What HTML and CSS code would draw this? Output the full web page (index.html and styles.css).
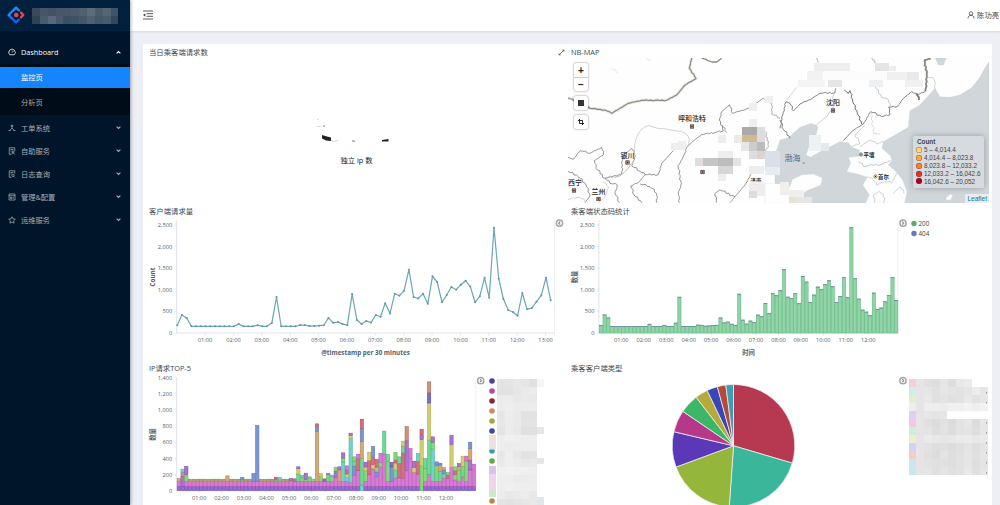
FILE: index.html
```html
<!DOCTYPE html>
<html>
<head>
<meta charset="utf-8">
<title>Dashboard</title>
<link rel="stylesheet" href="styles.css">
</head>
<body>
<div class="app">
  <aside class="sidebar">
    <div class="brand">
      <svg class="brand-logo" viewBox="0 0 18 18"><g fill="none" stroke-width="2.3" stroke-linejoin="round" stroke-linecap="round"><path stroke="#2489ee" d="M11.9 4.400 9 1.600 1.600 9 5 12.400"/><path stroke="#1763e8" d="M3.400 10.800 9 16.400l2.800-2.800"/><path stroke="#f04450" d="M14 6.600 16.300 9 14 11.400"/></g><circle cx="9.300" cy="9" r="2.300" fill="#f04450"/></svg>
      <svg class="brand-name" id="brand-name" viewBox="0 0 86 16"></svg>
    </div>
    <nav class="menu">
      <a class="item open"><svg class="icon" viewBox="0 0 16 16"><path d="M3.500 13.500a6.500 6.500 0 1 1 9 0zM8 9l3-3M8 4v1M4 8H3"/></svg><span>Dashboard</span><svg class="arrow" viewBox="0 0 8 8"><path d="M1 5.500 4 2.500l3 3"/></svg></a>
      <div class="submenu"><a class="sub active">监控页</a><a class="sub">分析页</a></div>
      <a class="item"><svg class="icon" viewBox="0 0 16 16"><path d="M8 3v5l-4.500 5M8 8l4.500 5M6.500 2.500h3v2h-3zM1 13h4.500M10.500 13H15"/></svg><span>工单系统</span><svg class="arrow" viewBox="0 0 8 8"><path d="m1 2.500 3 3 3-3"/></svg></a>
      <a class="item"><svg class="icon" viewBox="0 0 16 16"><path d="M6 14.500H2.500v-13h11v7M5 5h6M5 8h2M10 8a2 2 0 1 1 0 4 2 2 0 0 1 0-4M7.500 15c0-4 5-4 6 0"/></svg><span>自助服务</span><svg class="arrow" viewBox="0 0 8 8"><path d="m1 2.500 3 3 3-3"/></svg></a>
      <a class="item"><svg class="icon" viewBox="0 0 16 16"><path d="M7 14.500H2.500v-13h11V7M5 5h6M5 8h2M10 8.500a2.300 2.300 0 1 1 0 4.600 2.300 2.300 0 0 1 0-4.600M12 13l2 2"/></svg><span>日志查询</span><svg class="arrow" viewBox="0 0 8 8"><path d="m1 2.500 3 3 3-3"/></svg></a>
      <a class="item"><svg class="icon" viewBox="0 0 16 16"><path d="M2 2h12v12H2zM2 5.500h12M5 8.500h2.500v2.500H5zM10.500 8v3.500"/></svg><span>管理&amp;配置</span><svg class="arrow" viewBox="0 0 8 8"><path d="m1 2.500 3 3 3-3"/></svg></a>
      <a class="item"><svg class="icon" viewBox="0 0 16 16"><path d="m8 1.500 2 4.300 4.600.6-3.400 3.200.9 4.700L8 12l-4.100 2.300.9-4.700L1.400 6.400 6 5.800z"/></svg><span>运维服务</span><svg class="arrow" viewBox="0 0 8 8"><path d="m1 2.500 3 3 3-3"/></svg></a>
    </nav>
  </aside>
  <div class="main">
    <header class="topbar">
      <svg class="fold" viewBox="0 0 10 10"><path d="M0 1h10M3.600 3.700H10M3.600 6.300H10M0 9h10" fill="none" stroke="#444" stroke-width=".9"/><path d="M2.400 3.200v3.600L0 5z" fill="#444"/></svg>
      <div class="user"><svg viewBox="0 0 16 16"><circle cx="8" cy="5" r="3.500"/><path d="M2 15c0-4 2.500-6.500 6-6.500s6 2.500 6 6.500"/></svg><span>陈功亮</span></div>
    </header>
    <main class="board">
      <section class="panel">
        <h2>当日乘客端请求数</h2>
        <svg class="chart" id="metric" viewBox="143 44 422 159"></svg>
      </section>
      <section class="panel">
        <svg class="expand" viewBox="0 0 8 8"><path d="m1.500 6.500 5-5" stroke="#555" stroke-width=".9"/><path d="M4.500.8h2.700v2.700zM.8 4.500v2.700h2.700z" fill="#555"/></svg>
        <h2>NB-MAP</h2>
        <div class="map">
          <svg id="map" viewBox="568 58 421 145"></svg>
          <div class="controls">
            <div class="ctl"><b>+</b><b>−</b></div>
            <div class="ctl"><b><i class="square"></i></b></div>
            <div class="ctl"><b><svg viewBox="0 0 8 8"><path d="M2 0v6h6M0 2h6v6" fill="none" stroke="#222" stroke-width="1.300"/></svg></b></div>
          </div>
          <div class="legend">
            <strong>Count</strong>
            <span><i class="c1"></i>5 – 4,014.4</span>
            <span><i class="c2"></i>4,014.4 – 8,023.8</span>
            <span><i class="c3"></i>8,023.8 – 12,033.2</span>
            <span><i class="c4"></i>12,033.2 – 16,042.6</span>
            <span><i class="c5"></i>16,042.6 – 20,052</span>
          </div>
          <a class="leaflet">Leaflet</a>
        </div>
      </section>
      <section class="panel">
        <h2>客户端请求量</h2>
        <svg class="chart" id="requests" viewBox="143 203 422 157"></svg>
      </section>
      <section class="panel">
        <h2>乘客端状态码统计</h2>
        <svg class="chart" id="status" viewBox="565 203 427 157"></svg>
      </section>
      <section class="panel">
        <h2>IP请求TOP-5</h2>
        <svg class="chart" id="top-ip" viewBox="143 360 422 145"></svg>
      </section>
      <section class="panel">
        <h2>乘客客户端类型</h2>
        <svg class="chart" id="clients" viewBox="565 360 427 145"></svg>
      </section>
    </main>
  </div>
</div>
<script src="charts.js"></script>
</body>
</html>
```
FILE: styles.css
```css
* { box-sizing: border-box; }
body { margin: 0; font-family: "Open Sans", "Noto Sans CJK SC", sans-serif; overflow: hidden; }
.app { display: flex; width: 1000px; height: 505px; background: #eeeff4; }

.sidebar { width: 130px; background: #001529; box-shadow: 1px 0 3px rgba(0, 21, 41, .35); z-index: 2; color: #a6afb7; }
.brand { height: 31px; background: #00203d; display: flex; align-items: center; padding: 0 8px 1px 7px; gap: 7px; }
.brand-logo { width: 18px; height: 18px; }
.brand-name { width: 86px; height: 16px; margin-top: 2px; }
.menu { display: flex; flex-direction: column; padding-top: 9px; font-size: 7.25px; }
.item { height: 23px; display: flex; align-items: center; padding: 0 9px 0 8px; gap: 5px; }
.item span { flex: 1; white-space: nowrap; }
.item.open { height: 24px; color: #fff; }
.icon { width: 8px; height: 8px; fill: none; stroke: currentColor; stroke-width: 1.5; }
.arrow { width: 5px; height: 5px; fill: none; stroke: currentColor; stroke-width: 1.7; }
.submenu { background: #000c17; padding: 3px 0 2px; margin-bottom: 1px; display: flex; flex-direction: column; gap: 4px; }
.sub { height: 21px; line-height: 21px; padding-left: 21px; }
.sub.active { background: #1684fc; color: #fff; }

.main { flex: 1; display: flex; flex-direction: column; min-width: 0; }
.topbar { height: 31px; flex: none; background: #fff; display: flex; align-items: center; justify-content: space-between; padding: 0 1px 2px 13px; box-shadow: 0 1px 2px rgba(0, 21, 41, .1); }
.fold { width: 10px; height: 10px; }
.user { display: flex; align-items: center; gap: 2px; font-size: 7.3px; color: #444; }
.user svg { width: 8px; height: 8px; fill: none; stroke: #444; stroke-width: 1.5; }

.board { margin: 13px 8px 0 13px; background: #fff; display: grid; grid-template-columns: 422px 427px; grid-template-rows: 159px 157px 145px; }
.panel { position: relative; padding-left: 6px; }
.panel h2 { margin: 0; font-size: 7.35px; line-height: 10px; padding-top: 3px; font-weight: 400; color: #3c484f; }
.chart { position: absolute; inset: 0; width: 100%; height: 100%; }
.expand { position: absolute; left: -7px; top: 5px; width: 7px; height: 7px; }

.map { position: relative; width: 421px; height: 145px; margin: 1px 0 0 -3px; }
.map > svg { display: block; width: 421px; height: 145px; }
.controls { position: absolute; left: 6px; top: 5px; display: flex; flex-direction: column; gap: 5px; }
.ctl { width: 14px; background: #fff; border-radius: 2px; box-shadow: 0 0 2px rgba(0, 0, 0, .55); }
.ctl b { height: 14px; display: flex; align-items: center; justify-content: center; font: bold 10px "Liberation Sans", sans-serif; color: #222; }
.ctl b + b { border-top: 1px solid #ccc; }
.square { width: 6px; height: 6px; background: #333; }
.ctl svg { width: 6px; height: 6px; }
.legend { position: absolute; right: 5px; top: 78px; width: 71px; height: 52px; padding: 2px 3px; border-radius: 2.5px; background: rgba(215, 219, 223, .95); box-shadow: 0 0 6px rgba(0, 0, 0, .28); font: 6.35px/7.9px "Liberation Sans", sans-serif; color: #444; display: flex; flex-direction: column; white-space: nowrap; }
.legend strong { padding-left: 1px; }
.legend span { display: flex; align-items: center; gap: 2px; }
.legend i { width: 6px; height: 6px; border-radius: 50%; box-shadow: inset 0 0 0 .5px rgba(90, 50, 20, .6); flex: none; }
.c1 { background: #fed976; }
.c2 { background: #feab3b; }
.c3 { background: #f97d3c; }
.c4 { background: #e3312a; }
.c5 { background: #a80026; }
.leaflet { position: absolute; right: 0; bottom: 0; padding: 0 2px; height: 9px; font: 6.5px/9px "Liberation Sans", sans-serif; color: #0078a8; background: rgba(255, 255, 255, .55); }

.tick { font-size: 5.7px; fill: #555d66; }
.axis-title { font-size: 6.3px; font-weight: 700; fill: #565f68; }
.caption { font-size: 7.3px; fill: #222; }
.legend-label { font-size: 6.3px; fill: #444; }
.city { font-size: 6.9px; font-weight: 500; fill: #222; }
.town { font-size: 5.4px; font-weight: 700; fill: #222; }
.sea-name { font-size: 8px; fill: #566580; }
```
FILE: charts.js
```js
const el = id => document.getElementById(id);
const add = (id, markup) => { el(id).innerHTML += markup; };
const rect = (x, y, w, h, fill, extra = '') => `<rect x="${x}" y="${y}" width="${w}" height="${h}" fill="${fill}" ${extra}/>`;
const text = (x, y, cls, label, anchor = 'start', extra = '') => `<text x="${x}" y="${y}" class="${cls}" text-anchor="${anchor}" ${extra}>${label}</text>`;
const path = (d, stroke, width = 1, fill = 'none') => `<path d="${d}" fill="${fill}" stroke="${stroke}" stroke-width="${width}" stroke-linejoin="round"/>`;

// Masked labels: one hex digit per cell, added to a light base shade.
function masked(x, y, w, h, base, rows) {
  return rows.map((row, r) => [...row].map((ch, c) => {
    const v = base + parseInt(ch, 16) * 2;
    return rect(x + c * w, y + r * h, w, h, `rgb(${v},${v},${v})`, 'shape-rendering="crispEdges"');
  }).join('')).join('');
}

const brandShades = ['3a4a5c45566742526446576848586a4a5b6c5060705d6c7b4d5c6d566675405266', '3042554a5b6c5a6977485a6b3d50633f516445576950607045576a4a5b6c34485c'];
brandShades.forEach((row, r) => row.match(/.{6}/g).forEach((c, i) => add('brand-name', rect(i * 7.85, r * 8, 7.9, 8, '#' + c, 'shape-rendering="crispEdges"'))));

// Unique address metric, mostly masked
add('metric', path('M322 135 327 136.500 331 137.500v3.600l-5-.5-4-2z', 'none', 0, '#222')
  + path('M331 141q4 1 7-.8M317 126.500h4M317 119.500l2-.5', '#bbb', .6)
  + path('M352 140.800l3 .5M323 126h2', '#555', .8)
  + path('M382 140l6.500-1v2.500h-6.500z', 'none', 0, '#222')
  + text(356.500, 163, 'caption', '独立 ip 数', 'middle'));

const flat = (n, v = 155) => Array(n).fill(v);
const requests = [180, 420, 350, ...flat(10), 205, ...flat(3), 180, 155, 155, 230, 830, ...flat(4), 185, 180, 160, 165, 170, 180, 350, 235, 255, 205, 180,
  900, 300, 208, 278, 240, 417, 378, 687, 448, 910, 864, 980, 1466, 833, 802, 910, 679, 1312, 1180, 710, 880, 1065, 1003, 1119, 1211, 1073, 710, 849, 1281,
  818, 2438, 1258, 787, 532, 486, 401, 926, 548, 579, 725, 872, 1281, 756];

function axes(id, o) {
  let s = path(`M${o.x} ${o.top}V${o.y}H${o.end}`, '#d3d7df', .7) + path(`M${o.end} ${o.top}V${o.y + 3}`, '#e3e5ea', .6);
  for (let v = 0; v <= o.max; v += o.step) {
    const y = o.y - v * o.k;
    s += path(`M${o.x - 2} ${y}h2`, '#d3d7df', .6) + text(o.x - 4.500, y + 2, 'tick', v.toLocaleString('en-US'), 'end');
  }
  for (let h = 1; h <= o.hours; h++) {
    const x = o.x + h * o.hour;
    s += path(`M${x} ${o.y}v2.500`, '#d3d7df', .6) + text(x, o.y + 9.300, 'tick', String(h).padStart(2, '0') + ':00', 'middle');
  }
  s += text(0, 0, 'axis-title', o.yTitle, 'middle', `transform="translate(${o.x - 22} ${o.mid}) rotate(-90)"`);
  add(id, s);
}
const toggle = (x, y, left) => `<circle cx="${x}" cy="${y}" r="3.100" fill="#fff" stroke="#a6a6a6" stroke-width="1.500"/>` + path(left ? `M${x + .7} ${y - 1.500}l-1.500 1.500 1.500 1.500` : `M${x - .7} ${y - 1.500}l1.500 1.500-1.500 1.500`, '#8a8a8a', 1.200);

// Requests line
axes('requests', { x: 176.700, y: 333, top: 220.500, end: 554.500, max: 2500, step: 500, k: .0432, hours: 13, hour: 28.370, yTitle: 'Count', mid: 277 });
const pts = requests.map((v, i) => [(177.200 + i * 4.728).toFixed(1), (333 - v * .0432).toFixed(1)]);
add('requests', path('M' + pts.map(p => p.join(' ')).join('L'), '#6aa5b8', 1.200)
  + pts.map(p => `<circle cx="${p[0]}" cy="${p[1]}" r="1" fill="#5d97ab"/>`).join('')
  + text(365.500, 354.500, 'axis-title', '@timestamp per 30 minutes', 'middle') + toggle(559.500, 223.200, true));

// Status code bars
axes('status', { x: 598.900, y: 333, top: 220.500, end: 898, max: 2500, step: 500, k: .0432, hours: 12, hour: 22.440, yTitle: '数量', mid: 277 });
add('status', requests.map((v, i) => {
  const x = 599 + i * 3.739, h = v * .0432;
  return rect(x + .25, 333 - h, 3.240, h, '#92d3a8', 'stroke="#57b578" stroke-width=".55"') + rect(x, 332.700 - h, 3.740, .8, '#6f88a6');
}).join('') + text(748.500, 354.500, 'axis-title', '时间', 'middle') + toggle(903, 223.200)
  + '<circle cx="914" cy="223.500" r="2.700" fill="#57ad6d"/><circle cx="914" cy="233.500" r="2.700" fill="#6378c4"/>'
  + text(918.500, 225.800, 'legend-label', '200') + text(918.500, 235.800, 'legend-label', '404'));

// Stacked address bars: each string lists colour code + segment height in thirds of a pixel
const colors = { v: '#9170cf', m: '#d57cd3', o: '#d6a777', g: '#88d77d', b: '#7d96d2', y: '#d2cd75', t: '#76d0c9', r: '#cf7180', p: '#a777d0', e: '#73d695', s: '#cf8f78', i: '#7770cc' };
const edges = { v: '#6640b5', m: '#bb4db8', o: '#b68148', g: '#55b64a', b: '#5571b8', y: '#b1aa40', t: '#43b2aa', r: '#b54759', p: '#8046b2', e: '#3bb868', s: '#b7674b', i: '#4a42ab' };
const base = 'v13 m15 o4 g3';
const stacks = Array(80).fill(base);
Object.assign(stacks, {
  0: 'v13 m15 o9', 1: 'v13 p30 s12 t10', 2: 'v13 m15 g20 p25', 13: 'v13 m15 o17', 17: 'v13 m15 g4 b8', 20: 'v13 m15 b24', 21: 'v13 m15 b168', 26: 'v13 m15 g4 r9',
  27: 'v13 m15 g4 t8', 30: 'v13 m15 g3 p6', 31: 'v13 m15 r8', 32: 'v13 m15 e22 y16 p6', 33: 'v13 m15 g11 e7', 34: 'v13 m15 g5 p20', 35: 'v13 m15 g10 e4', 36: 'v13 m15 g7',
  37: 'v13 m15 o150 b14 r9', 38: 'v13 m15 g15 y9', 39: 'v13 m15 p4 r4', 40: 'v13 m15 e14 y5 b5', 41: 'v13 m15 g15 t4', 42: 'v13 m28 p18 g12', 43: 'v13 m15 o34 p10',
  44: 'v13 m15 t58 g12 p16', 45: 'v13 m15 t12 y10 r12 m13', 46: 'v13 m12 t132 y9 p7', 47: 'v13 m34 b27 e15 g13', 48: 'v13 m48 r35 m14', 49: 't17 e80 o51 b39 r28',
  50: 'v13 m15 g32 y11 p15', 51: 'v13 m36 r42 y25', 52: 'v13 m53 y12 r24 b31', 53: 'v13 m29 b14 g15 r23', 54: 'v13 m59 g13 m28', 55: 'v13 m97 e69', 56: 'v13 m15 g59 e22',
  57: 'v13 m15 b43 i14', 58: 'v13 m25 e25 y20 r10 g22', 59: 'v13 m26 r43 e20', 60: 'v13 m24 r76 e20 y16', 61: 'v13 m47 p91 s42', 62: 'v13 m83 m31', 63: 'v13 m42 y15 p19',
  64: 'v13 m37 r38 t24', 65: 'g75 y78 p15 r17', 66: 'v13 m15 g39 e30', 67: 'v13 m36 e103 y111 i31 s33', 68: 'v13 m15 t97 g20 p17', 69: 'v13 m15 g47 b12', 70: 'v13 m15 e30 o19 b6',
  71: 'v13 m25 t12 b12 o8', 72: 'v13 m24 r10 g8', 73: 'v13 m57 y68 p28', 74: 'v13 m19 g16 r12 g12', 75: 'v13 m15 g33 o12 p9', 76: 'v13 m29 e31 y31', 77: 'v13 m15 g61 m15', 78: 'v13 m49 p30 o35 b19', 79: 'v13 m50 m17'
});
axes('top-ip', { x: 176.700, y: 490.700, top: 377.500, end: 475.800, max: 1400, step: 200, k: .0805, hours: 12, hour: 22.440, yTitle: '数量', mid: 434.500 });
add('top-ip', stacks.map((s, i) => {
  let y = 490.700, out = '';
  s.split(' ').forEach(seg => {
    const px = +seg.slice(1) / 3, c = seg[0];
    y -= px;
    out += rect((177 + i * 3.735 + .2).toFixed(2), (y + .15).toFixed(2), 3.300, Math.max(px - .25, .3).toFixed(2), colors[c], `stroke="${edges[c]}" stroke-width=".55"`);
  });
  return out;
}).join('') + toggle(480.700, 380.700)
  + ['#523ca2', '#ad4cae', '#8c2736', '#ca915d', '#ada245', '#3b49a8', null, '#3c9dae', '#62ac3d', null, null, null, '#b98a42'].map((c, i) => c ? `<circle cx="492" cy="${381 + i * 10}" r="2.800" fill="${c}"/>` : '').join('')
  + rect(489, 435, 7, 8, '#f2dfdf') + rect(489, 443, 7, 6.500, '#e9e3e4') + rect(489, 466, 7, 8, '#d6c4ea') + rect(489, 474, 7, 16, '#f0d4ea') + rect(489, 490, 7, 7, '#c9e8ce')
  + masked(497, 379, 8, 8, 222, ['33541', '22467', '77565', '78777', '47622', '57633', '37511', '89888', '87788', '58523', '68756', '9a998', '88677', '89888', '75675', '32345'])
  + rect(537, 379, 7, 8, '#f6f6f6') + rect(537, 427, 7, 7, '#e7e7e7') + rect(537, 458, 7, 6, '#e6e6e6') + rect(537, 497, 7, 8, '#e3e6e9'));

// Client share pie
const cx = 733.500, cy = 445.800, rad = 61.300;
const stops = [0, 106.400, 184, 249.700, 283.300, 304.200, 322.400, 334.600, 344.700, 352.800, 360];
const pie = ['#b73851', '#3ab79a', '#94b63a', '#5a38b7', '#b6388a', '#3bb767', '#b7a93a', '#3847b7', '#b64a39', '#3a9eb7'];
const at = a => `${(cx + rad * Math.sin(a * Math.PI / 180)).toFixed(2)} ${(cy - rad * Math.cos(a * Math.PI / 180)).toFixed(2)}`;
const tints = ['#f3cfd8', '#cfeee8', '#e2efcf', '#eeeeee', '#dccff3', '#f2c9e4', '#ccefd8', '#f1edcf', '#d0d4f0', '#f2cdc9', '#c9e8ee', '#c9e8ee'];
add('clients', pie.map((c, i) => path(`M${cx} ${cy}L${at(stops[i])}A${rad} ${rad} 0 0 1 ${at(stops[i + 1])}Z`, '#eee', .8, c)).join('') + toggle(903, 380.700)
  + masked(924, 379, 8, 8, 216, ['43738a', '747657a7', '84645857', 'bbaccdbd', '767f', '42525727', '63525637', '98789a89', '53424636', '42635747', '54435736', '74645847'].map(r => r))
  + tints.map((c, i) => rect(909, 379 + i * 8, 7, 8, c, 'shape-rendering="crispEdges"') + rect(916, 379 + i * 8, 8, 8, '#e6e4e6', 'shape-rendering="crispEdges"')).join('')
  + rect(947, 411, 40, 8, '#fff')
  + [392, 402, 422, 432, 442, 452, 462, 472].map(y => rect(986, y, .8, 1.500, '#888')).join(''));

// Jagged variant of a polyline, for borders
function rough(points, amp) {
  let d = 'M' + points[0].join(' ');
  for (let i = 1; i < points.length; i++) {
    const [ax, ay] = points[i - 1], [bx, by] = points[i];
    const n = Math.max(1, Math.round(Math.hypot(bx - ax, by - ay) / 7));
    for (let k = 1; k <= n; k++) {
      const j = k === n ? 0 : amp * ((i * 5 + k * 7) % 5 - 2) / 2;
      d += `L${(ax + (bx - ax) * k / n + j).toFixed(1)} ${(ay + (by - ay) * k / n - j).toFixed(1)}`;
    }
  }
  return d;
}
const border = (str, color, width, amp = 2.500) => path(rough(str.split(' ').map(p => p.split(',').map(Number)), amp), color, width);
const sea = 'M627 66 614 85 600 112 575 143 540 165 510 172 480 170 465 145 450 162 420 195 390 212 385 262 345 285 310 305 306 325 332 348 336 362 325 374 350 397 368 420 381 455 374 490H627Z'
  + 'M-15 345 0 300 25 293 60 262 95 250 114 260 108 285 90 310 78 345 92 352 130 330 180 305 205 308 215 322 238 330 240 348 205 352 212 370 200 395 232 402 262 412 248 435 268 465 256 490H-15Z'
  + 'M466 54 499 54 490 75 475 75Z';
const mosaic = (list) => list.map(([x, y, w, h, c]) => rect(x, y, w, h, c)).join('');
add('map', rect(568, 58, 421, 145, '#fefefe')
  + '<g transform="translate(780 40) scale(.33333)">'
  + path(sea, '#c6cdd2', 1, '#d0d6da')
  + path('M-45 490V430L0 432 30 440 38 418 65 405 100 402 127 414 122 435 80 452 65 465 50 490Z', '#ddd', 1, '#fefefe')
  + path('M498 475 510 464 517 466 512 478 502 480Z', '#fff', 1, '#fff')
  + border('0,265 8,225 18,185 30,190 40,213 60,192 92,178 120,160 165,158 167,145', '#6c6c6c', 2.500)
  + border('0,240 10,268 30,295', '#6c6c6c', 2.500)
  + border('193,150 205,160 210,152 218,185 232,220 245,252', '#606060', 2.800)
  + border('190,302 218,272 250,252 272,215 305,230 330,224 325,202 352,200 370,175 395,155 410,166 436,154', '#858585', 3)
  + border('436,154 441,110 434,60 452,57', '#aaa59d', 6, 2) + border('436,154 441,110 434,60 452,57', '#666', 2, 2)
  + border('410,160 417,180', '#777', 5, 2)
  + border('441,110 463,118 465,145', '#bbb', 2) + border('285,140 305,172 325,180 330,202', '#aaa', 2)
  + border('167,145 158,175 160,200 140,230 105,258', '#bbb', 2) + border('20,180 50,142', '#bbb', 2)
  + border('215,320 240,310 225,285 255,255', '#bbb', 2) + border('240,320 270,300 290,312 310,305', '#bbb', 2)
  + border('272,215 282,280 300,285', '#ccc', 2) + border('235,365 255,380 275,375 300,375 332,362', '#aaa', 2)
  + border('262,410 280,420 290,435 315,425 335,428 350,400', '#bbb', 2) + border('285,490 280,465 300,455 315,475 310,490', '#bbb', 2) + border('340,460 360,440 372,460', '#bbb', 2)
  + border('110,54 115,68', '#888', 2) + border('275,54 285,70', '#888', 2) + border('325,80 340,92', '#888', 3)
  + path('M67 369h8', '#666', 2)
  + '</g><g transform="translate(560 40) scale(.33333)">'
  + '<g opacity=".3">' + border('24,174 60,188 90,205 135,210 155,220 205,190 245,181 320,181 350,165 375,135 408,116 388,85 395,54', '#b3aea0', 9, 1) + '</g>'
  + border('24,174 60,188 90,205 135,210 155,220 205,190 245,181 320,181 350,165 375,135 408,116 388,85 395,54', '#8d8980', 3.500, 1.200)
  + border('425,54 455,66 470,66 485,55', '#8d8980', 4, 1)
  + border('24,352 40,358 60,332 90,340 125,322 130,345 103,362 108,385 135,415 185,402 188,348 215,325 226,347 215,378 240,394 255,404 295,404 305,370 340,332', '#777', 2.300)
  + border('380,322 400,303 425,284 490,273 478,240 485,215 508,195 518,220 565,205 610,175', '#777', 2.300)
  + border('610,175 635,190 635,222 660,235', '#888', 2) + border('485,255 500,278', '#777', 2)
  + '<path d="M222 348C222 295 235 265 265 257C285 262 295 268 310 266L360 274C385 280 395 295 382 322" fill="none" stroke="#bbb" stroke-width="2"/>'
  + border('135,415 180,408 200,390 215,370', '#bbb', 3)
  + border('380,322 372,345 354,380 364,430 355,460 358,488', '#777', 2.300) + border('255,404 235,428 212,438 222,465 245,488', '#777', 2.300) + border('240,432 270,440 290,460 290,488', '#777', 2.300)
  + border('135,415 150,430 172,435 165,460 178,488', '#777', 2.300) + border('24,394 55,410 78,435 90,468 75,488', '#777', 2.300) + border('115,488 135,470 145,440 130,428', '#bbb', 2)
  + border('470,488 465,460 480,450 525,470 555,435 575,400 613,385', '#777', 2.300) + border('24,478 60,472 75,484', '#bbb', 2) + border('613,335 625,320 618,275', '#888', 2)
  + border('525,470 510,488', '#777', 2) + border('155,85 175,100', '#ddd', 2) + border('259,55 272,62', '#ddd', 2)
  + '</g>'
  + mosaic([[814, 63, 36, 8, '#eeeeee'], [875, 63, 14, 8, '#e5e5e5'], [889, 66, 7, 8, '#eee'], [816, 71, 90, 9, '#fcfcfc'], [807, 71, 16, 9, '#f2f2f2'], [887, 72, 20, 8, '#f0f0f0'], [907, 72, 12, 8, '#e9e9e9'], [798, 80, 27, 7, '#f4f4f4'], [828, 80, 14, 7, '#e5e5e5'], [869, 80, 14, 7, '#edf0f2'], [905, 80, 18, 7, '#f1f1f1'],
    [809, 135, 12, 16, '#eff2f3'], [821, 143, 8, 8, '#e4e9eb'], [749, 103, 8, 8, '#eee'], [765, 96, 8, 7, '#f0f0f0'],
    [749, 119, 8, 8, '#f1eeee'], [742, 127, 16, 8, '#aaa'], [742, 135, 15, 7, '#cdbb92'], [757, 127, 8, 16, '#ddd'], [734, 135, 8, 8, '#eaeaea'], [741, 142, 8, 9, '#e6e6e6'], [749, 142, 8, 9, '#ccc'], [757, 142, 8, 9, '#bbb'], [757, 151, 8, 8, '#ded3cd'], [749, 151, 8, 8, '#ddd'], [765, 151, 15, 16, '#d8e1e7'], [765, 167, 15, 8, '#e6ecef'],
    [695, 158, 8, 8, '#dedede'], [703, 158, 15, 8, '#c5c5c5'], [718, 158, 15, 8, '#bdbdbd'], [718, 166, 15, 8, '#d6d6d6'], [733, 158, 8, 8, '#e3e3e3'], [718, 151, 15, 7, '#eee'], [718, 135, 8, 8, '#eee'], [671, 143, 14, 7, '#ededed'], [678, 141, 8, 8, '#eee'], [718, 174, 8, 7, '#eee'], [749, 166, 15, 8, '#ededed'], [749, 183, 16, 8, '#eee'], [749, 191, 8, 7, '#ddd'], [757, 189, 8, 7, '#eee'], [780, 182, 9, 13, '#f0efeb'], [789, 190, 15, 7, '#f0efed'], [789, 197, 8, 8, '#e6e2d6'], [797, 197, 15, 8, '#e5e6e8']])
  + [[692, 126.500], [627.500, 162.500], [574, 190.500], [598.500, 199], [702.500, 172], [833, 110.500]].map(([x, y]) => rect(x - 1.700, y - 1.700, 3.400, 3.400, '#d0977f', 'stroke="#4a3a36" stroke-width=".7"') + rect(x - .7, y - .7, 1.400, 1.400, '#3a2a26')).join('')
  + [[861, 154.500], [875.500, 176.500]].map(([x, y]) => `<circle cx="${x}" cy="${y}" r="1.600" fill="#fff" stroke="#333" stroke-width=".6"/><circle cx="${x}" cy="${y}" r=".7" fill="#333"/>`).join('')
  + text(692, 120.500, 'city', '呼和浩特', 'middle') + text(627.500, 157.500, 'city', '银川', 'middle') + text(568, 184.500, 'city', '西宁') + text(598.500, 193.500, 'city', '兰州', 'middle') + text(833, 105, 'city', '沈阳', 'middle')
  + text(756, 182.500, 'town', '济南', 'middle') + text(863.500, 156.500, 'town', '平壤') + text(878, 178.500, 'town', '首尔') + text(784.500, 160.500, 'sea-name', '渤海')
  // The mask hides the lower half of this label
  + rect(749, 181.500, 15, 3, '#f0f0f0'));
```
